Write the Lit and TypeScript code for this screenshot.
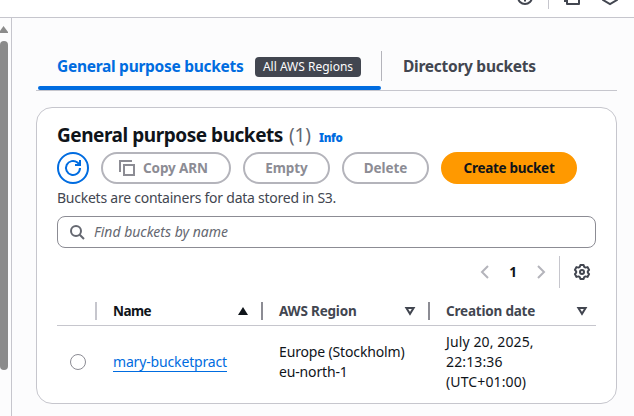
import { LitElement, html, css, svg } from "lit";

const copyIcon = html`<svg class="copy" viewBox="0 0 16 16" width="16" height="16"><path d="M1 12V1h12" /><path d="M5 5h10v10H5z" /></svg>`;
const refreshIcon = html`<svg viewBox="0 0 16 16" width="16" height="16"><path d="M15 8A7 7 0 1 1 12.500 2.600L15 5" /><path d="M15 0v5h-5" /></svg>`;
const searchIcon = html`<svg viewBox="0 0 16 16" width="16" height="16"><circle cx="7" cy="7" r="5" /><path d="M10.700 10.700L15 15" /></svg>`;
const gearPath = "M6.400 1h3.200l.6 1.900 1.300.7 2-.5 1.600 2.800L13.800 7.400v1.200l1.300 1.500-1.600 2.800-2-.5-1.300.7-.6 1.900H6.400l-.6-1.900-1.300-.7-2 .5L.9 10.100 2.200 8.600V7.400L.9 5.900l1.600-2.800 2 .5 1.300-.7z";
const gearIcon = html`<svg viewBox="0 0 16 16" width="16" height="16" stroke-linejoin="round"><path d=${gearPath} /><circle cx="8" cy="8" r="2" /></svg>`;
const chevron = (d: string) => html`<svg viewBox="0 0 16 16" width="16" height="16"><path d=${d} /></svg>`;
const sortIcon = (asc: boolean) => html`<svg class="sort" viewBox="0 0 16 16" width="16" height="16">
  ${asc ? svg`<path class="solid" d="M8 4L13 12H3z" />` : svg`<path d="M4.400 5h7.200L8 10.800z" />`}
</svg>`;

class AppRoot extends LitElement {
  static styles = css`
    :host { display: flex; flex-direction: column; height: 416px; overflow: hidden; background: #fcfcfd; color: #0f141a; font: 14px/20px "Noto Sans", "Open Sans", sans-serif; }
    * { box-sizing: border-box; }
    svg { display: block; flex: none; fill: none; stroke: currentColor; stroke-width: 2; overflow: visible; }
    .solid { fill: currentColor; stroke: none; }
    .topbar { height: 18px; flex: none; background: #fff; border-bottom: 1px solid #c6c6cd; display: flex; justify-content: flex-end; align-items: flex-start; color: #424650; padding-right: 16px; }
    .topbar svg { margin-top: -11px; }
    .topbar i { width: 1px; height: 9px; background: #c6c6cd; margin: 0 15px; }
    .topbar svg:last-child { margin-left: 22px; }
    .body { flex: 1; display: flex; min-height: 0; }
    .rail { width: 12px; flex: none; border-right: 1px solid #c6c6cd; padding-top: 8px; }
    .rail svg { fill: #8b8b8b; stroke: none; }
    .thumb { width: 8px; height: 329px; margin-top: 8px; background: #8b8b8b; border-radius: 4px; }
    main { flex: 1; padding: 33px 17px 0 24px; }
    .tabs { display: flex; height: 40px; border-bottom: 1px solid #c6c6cd; font-weight: 700; font-size: 15.5px; color: #424650; }
    .tab { display: flex; padding-left: 19px; margin-left: 2px; width: 343px; height: 39px; position: relative; color: #006ce0; letter-spacing: -.28px; white-space: nowrap; }
    .tab::after { content: ""; position: absolute; left: 0; right: 0; bottom: 0; height: 4px; border-radius: 2px; background: #006ce0; }
    .tab span { line-height: 30px; width: 186px; }
    .badge { margin: 6px 0 0 12px; width: 106px; height: 20px; border-radius: 4px; background: #424650; color: #fcfcfd; font-size: 12px; font-weight: 400; text-align: center; letter-spacing: 0; }
    .tab2 { border-left: 1px solid #b4b4bb; height: 30px; line-height: 31px; padding-left: 21px; letter-spacing: -.27px; }
    .card { margin-top: 16px; height: 297px; background: #fff; border: 1px solid #c6c6cd; border-radius: 16px; padding: 15px 20px 0; }
    h1 { margin: 0; font-size: 19px; line-height: 24px; letter-spacing: -.46px; display: flex; align-items: baseline; white-space: nowrap; }
    h1 span { font-weight: 400; color: #656871; margin-left: 6px; letter-spacing: -.1px; }
    h1 b { color: #006ce0; font-size: 11.5px; letter-spacing: -.3px; margin-left: 8px; }
    .actions { display: flex; gap: 12px; margin-top: 2px; }
    .btn { height: 32px; border: 2px solid #b4b4bb; border-radius: 16px; color: #8c8c94; font-weight: 700; font-size: 13.5px; letter-spacing: -.1px; display: flex; align-items: center; justify-content: center; gap: 8px; }
    .refresh { width: 32px; color: #006ce0; border-color: #006ce0; }
    .copybtn { width: 130px; justify-content: flex-start; padding-left: 16px; }
    .empty, .delete { width: 87px; }
    .create { width: 136px; background: #ff9900; border-color: #ff9900; color: #0f141a; letter-spacing: -.28px; }
    .desc { color: #424650; margin-top: 4px; letter-spacing: -.245px; }
    .search { margin-top: 8px; height: 32px; border: 1px solid #8c8c94; border-radius: 8px; display: flex; align-items: center; gap: 9px; padding-left: 11px; color: #656871; font-style: italic; }
    .pager { display: flex; align-items: center; height: 32px; margin-top: 8px; justify-content: flex-end; padding-right: 6px; color: #b4b4bb; }
    .pager b { color: #0f141a; width: 40px; text-align: center; font-size: 13.5px; }
    .pager i { width: 1px; height: 32px; background: #c6c6cd; margin: 0 14px 0 10px; }
    .pager .gear { color: #424650; }
    .grid { display: grid; grid-template-columns: 38px 166px 167px 168px; }
    .head { height: 38px; border-bottom: 1px solid #c6c6cd; align-items: center; font-weight: 700; font-size: 13.5px; color: #424650; }
    .th { display: flex; justify-content: space-between; align-items: center; height: 18px; border-left: 2px solid #8c8c94; padding: 0 10px 0 16px; margin-top: 8px; letter-spacing: -.2px; }
    .th:last-child { padding-right: 6px; }
    .name { color: #0f141a; border-color: #c6c6cd; letter-spacing: -.55px; }
    .row { height: 71px; align-items: center; }
    .radio { width: 16px; height: 16px; border: 1px solid #8c8c94; border-radius: 50%; margin-left: 13px; }
    .td { padding-left: 18px; white-space: nowrap; letter-spacing: -.15px; }
    .td a { color: #006ce0; border-bottom: 1px solid #006ce0; letter-spacing: -.16px; }
    .date { letter-spacing: .12px; }
  `;

  render() {
    return html`
      <div class="topbar">
        <svg viewBox="0 0 16 16" width="16" height="16"><circle cx="8" cy="8" r="7" /><path d="M8 10.500v2" /></svg>
        <i></i>
        <svg viewBox="0 0 16 16" width="16" height="16" stroke-linejoin="round"><path d="M0 12h4M3 1v14h12V1" /></svg>
        <svg viewBox="0 0 16 16" width="16" height="16"><path d="M8 0l7 3.500v7.500L8 15l-7-4v-7.500z" /></svg>
      </div>
      <div class="body">
        <div class="rail">
          <svg viewBox="0 0 8 7" width="8" height="7"><path d="M3.500 0L8 6v1H0V5z" /></svg>
          <div class="thumb"></div>
        </div>
        <main>
          <div class="tabs">
            <div class="tab"><span>General purpose buckets</span><div class="badge">All AWS Regions</div></div>
            <div class="tab2">Directory buckets</div>
          </div>
          <section class="card">
            <h1>General purpose buckets<span>(1)</span><b>Info</b></h1>
            <div class="actions">
              <div class="btn refresh">${refreshIcon}</div>
              <div class="btn copybtn">${copyIcon}Copy ARN</div>
              <div class="btn empty">Empty</div>
              <div class="btn delete">Delete</div>
              <div class="btn create">Create bucket</div>
            </div>
            <div class="desc">Buckets are containers for data stored in S3.</div>
            <div class="search">${searchIcon}Find buckets by name</div>
            <div class="pager">
              ${chevron("M11 2L5 8l6 6")}<b>1</b>${chevron("M5 2l6 6-6 6")}<i></i><span class="gear">${gearIcon}</span>
            </div>
            <div class="grid head">
              <span></span>
              <div class="th name">Name${sortIcon(true)}</div>
              <div class="th">AWS Region${sortIcon(false)}</div>
              <div class="th">Creation date${sortIcon(false)}</div>
            </div>
            <div class="grid row">
              <div class="radio"></div>
              <div class="td"><a>mary-bucketpract</a></div>
              <div class="td">Europe (Stockholm)<br />eu-north-1</div>
              <div class="td date">July 20, 2025,<br />22:13:36<br />(UTC+01:00)</div>
            </div>
          </section>
        </main>
      </div>`;
  }
}
customElements.define("app-root", AppRoot);
